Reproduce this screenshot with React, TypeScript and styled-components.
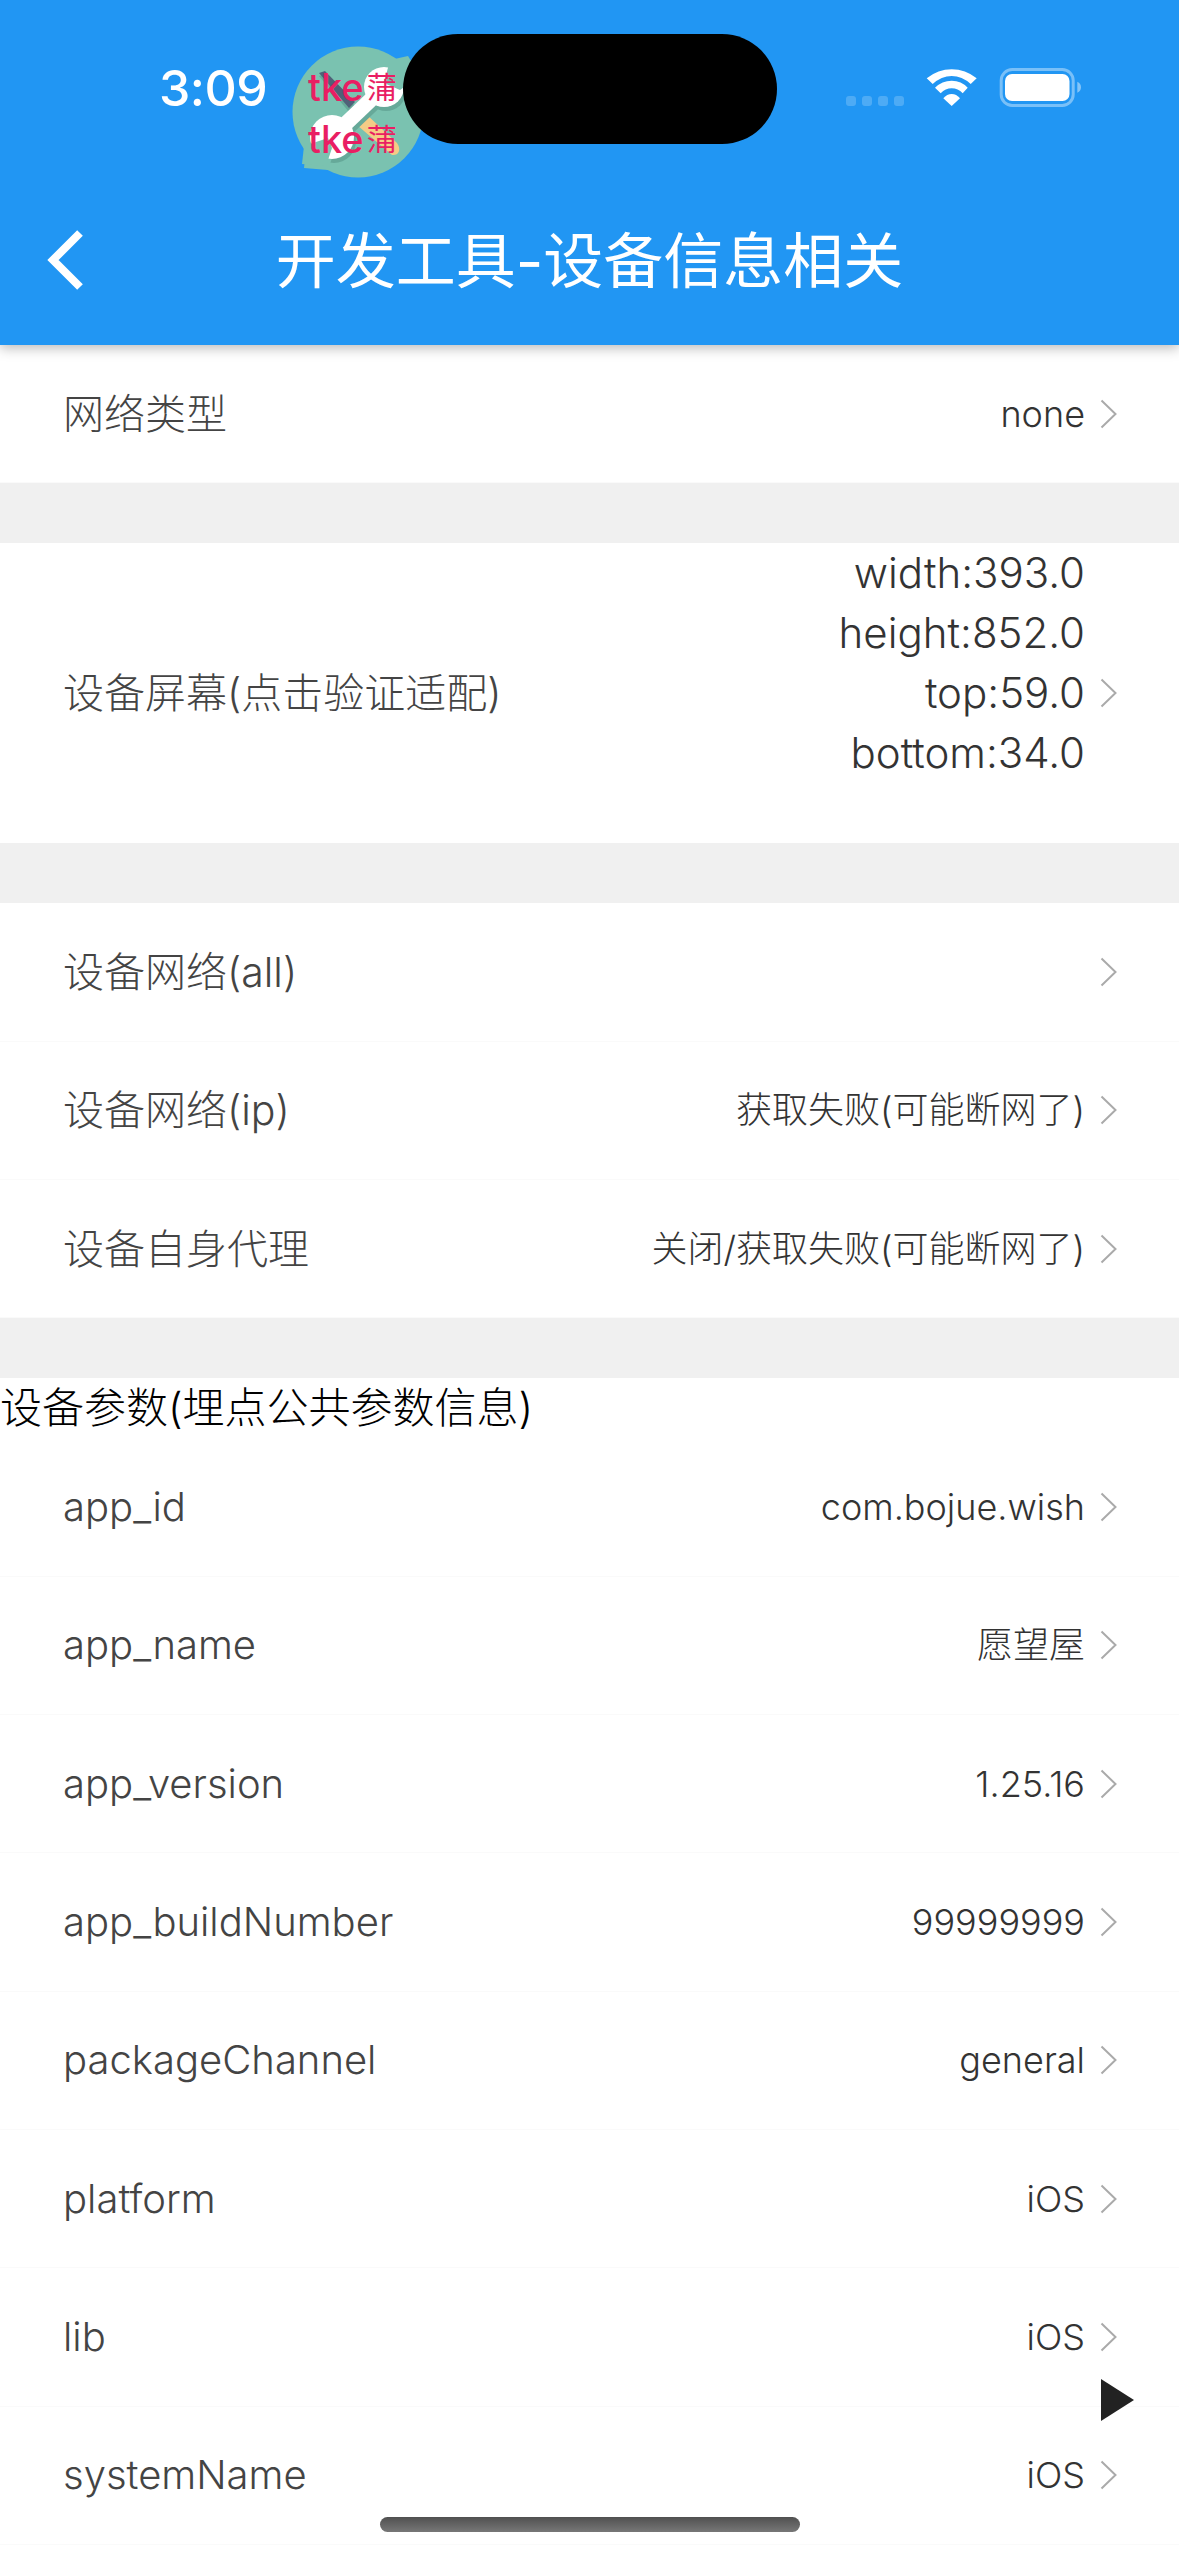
import React from "react";
import styled, { createGlobalStyle } from "styled-components";

const Global = createGlobalStyle`
  html, body { margin: 0; padding: 0; background: #fff; }
  body { font-family: "Inter", "Noto Sans CJK SC", sans-serif; }
  * { box-sizing: border-box; }
`;

const Screen = styled.div`
  position: relative;
  width: 1179px;
  height: 2556px;
  overflow: hidden;
  background: #fff;
`;

const Header = styled.header`
  position: relative;
  z-index: 2;
  height: 345px;
  background: #2196f3;
  box-shadow: 0 3px 12px rgba(0, 0, 0, 0.28);
`;

const StatusBar = styled.div`
  display: flex;
  align-items: flex-start;
  justify-content: space-between;
  height: 177px;
  padding: 58px 98px 0 159px;
`;

const Clock = styled.span`
  font-family: "Inter", sans-serif;
  font-size: 50px;
  line-height: 60px;
  font-weight: 500;
  letter-spacing: -0.5px;
  color: #fff;
`;

const StatusIcons = styled.div`
  display: flex;
  align-items: flex-start;
  padding-top: 10px;
`;

const Island = styled.div`
  position: absolute;
  left: 403px;
  top: 34px;
  width: 374px;
  height: 110px;
  border-radius: 55px;
  background: #000;
`;

const DebugBubble = styled.div`
  position: absolute;
  left: 292px;
  top: 46px;
  width: 132px;
  height: 132px;
`;

const BubbleText = styled.div<{ $top: number }>`
  position: absolute;
  left: 16px;
  top: ${(p) => p.$top}px;
  display: flex;
  align-items: center;
  gap: 3px;
  font-family: "Inter", "Noto Sans CJK SC", sans-serif;
  color: #e91e63;
  font-size: 38px;
  font-weight: 500;
  line-height: 40px;
  white-space: nowrap;
`;

const BubbleHan = styled.span`
  font-size: 30px;
  font-weight: 400;
`;

const NavBar = styled.div`
  position: relative;
  display: flex;
  align-items: center;
  justify-content: center;
  height: 168px;
`;

const BackIcon = styled.svg`
  position: absolute;
  left: 44px;
  top: 52px;
`;

const NavTitle = styled.h1`
  margin: 0;
  font-family: "Inter", "Noto Sans CJK SC", sans-serif;
  font-size: 60px;
  line-height: 80px;
  font-weight: 400;
  color: #fff;
`;

const Gap = styled.div`
  height: 60px;
  background: #f0f0f0;
`;

const Row = styled.div<{ $tall?: boolean }>`
  display: flex;
  align-items: center;
  height: ${(p) => (p.$tall ? "300px" : "138.33px")};
  padding: 0 62px 0 63px;
  border-bottom: ${(p) => (p.$tall ? "none" : "1px solid #fafafa")};
`;

const Label = styled.span<{ $han?: boolean }>`
  flex: 1;
  font-size: ${(p) => (p.$han ? 41 : 40)}px;
  line-height: 60px;
  font-weight: 300;
  color: #444;
`;

const Value = styled.span`
  font-size: 36px;
  line-height: 60px;
  font-weight: 300;
  color: #333;
  text-align: right;
`;

const ScreenValue = styled.div`
  padding-bottom: 60px;
  font-size: 42px;
  line-height: 60px;
  font-weight: 300;
  color: #333;
  text-align: right;
`;

const Chevron = styled.svg`
  flex: none;
  margin-left: 15px;
`;

const SectionTitle = styled.h2`
  margin: 0;
  height: 60px;
  font-size: 42px;
  line-height: 60px;
  font-weight: 300;
  color: #000;
`;

const PlayMark = styled.svg`
  position: absolute;
  left: 1101px;
  top: 2379px;
`;

const HomeBar = styled.div`
  position: absolute;
  left: 380px;
  top: 2517px;
  width: 420px;
  height: 15px;
  border-radius: 8px;
  background: linear-gradient(#505050, #777);
`;

const Arrow = () => (
  <Chevron width="17" height="30" viewBox="0 0 17 30" fill="none">
    <path d="M1.5 1.5 15.5 15 1.5 28.5" stroke="#aaa" strokeWidth="2" />
  </Chevron>
);

type Item = { label: string; value?: string; han?: boolean };

const ItemRow = ({ label, value, han }: Item) => (
  <Row>
    <Label $han={han}>{label}</Label>
    {value && <Value>{value}</Value>}
    <Arrow />
  </Row>
);

const networkRows: Item[] = [
  { label: "设备网络(all)", han: true },
  { label: "设备网络(ip)", value: "获取失败(可能断网了)", han: true },
  { label: "设备自身代理", value: "关闭/获取失败(可能断网了)", han: true },
];

const paramRows: Item[] = [
  { label: "app_id", value: "com.bojue.wish" },
  { label: "app_name", value: "愿望屋" },
  { label: "app_version", value: "1.25.16" },
  { label: "app_buildNumber", value: "99999999" },
  { label: "packageChannel", value: "general" },
  { label: "platform", value: "iOS" },
  { label: "lib", value: "iOS" },
  { label: "systemName", value: "iOS" },
];

const Wrench = ({ fill, notch }: { fill: string; notch: string }) => (
  <g>
    <path d="M45 86 88 45" stroke={fill} strokeWidth="15" />
    <circle cx="92" cy="41" r="20" fill={fill} />
    <circle cx="40" cy="91" r="22" fill={fill} />
    <path d="M98 14 92 37 108 44 128 30 116 10z" fill={notch} />
    <path d="M12 100 36 92 40 102 34 120 10 118z" fill={notch} />
  </g>
);

export default function App() {
  return (
    <>
      <Global />
      <Screen>
        <Header>
          <StatusBar>
            <Clock>3:09</Clock>
            <StatusIcons>
              <svg width="235" height="42" viewBox="0 0 235 42">
                <g fill="#fff" fillOpacity="0.2">
                  <rect x="0" y="28" width="10" height="10" rx="3" />
                  <rect x="16" y="28" width="10" height="10" rx="3" />
                  <rect x="32" y="28" width="10" height="10" rx="3" />
                  <rect x="48" y="28" width="10" height="10" rx="3" />
                </g>
                <g fill="#fff">
                  <path d="M80.700 10.300Q92 1.300 105.700 1.300T130.700 10.300L124.700 16Q116 8 105.700 8T86.700 16z" />
                  <path d="M89 19.700Q96 12.700 105.700 12.700T121.700 19.700L116.700 25.300Q112 20.300 105.700 20.300T94.700 25.300z" />
                  <path d="M97.300 30.300Q101 26 105.700 26T114 30.300L105.700 38z" />
                </g>
                <rect x="155.200" y="1.500" width="72" height="36" rx="11" fill="none" stroke="#fff" strokeOpacity="0.4" strokeWidth="3" />
                <rect x="159" y="6" width="64.500" height="27" rx="7" fill="#fff" />
                <path d="M231.300 13.700c2.500 1 3.700 3 3.700 5.500s-1.200 4.500-3.700 5.500z" fill="#fff" fillOpacity="0.45" />
              </svg>
            </StatusIcons>
          </StatusBar>
          <NavBar>
            <BackIcon width="42" height="62" viewBox="0 0 42 62" fill="none">
              <path d="M36 4 9 31l27 27" stroke="#fff" strokeWidth="8" />
            </BackIcon>
            <NavTitle>开发工具-设备信息相关</NavTitle>
          </NavBar>
          <DebugBubble>
            <svg width="132" height="132" viewBox="0 0 132 132">
              <circle cx="66" cy="66" r="65.500" fill="#7ac2b0" />
              <path d="M27 30 57 66 63 60 33 28z" fill="#66a999" />
              <path d="M27 27 33 25 63 56 57 62z" fill="#4f6178" />
              <path d="M73 67 105 97C110 104 106 110 100 109L65 79z" fill="#f5cc86" />
              <g transform="translate(2 4)">
                <Wrench fill="#66a999" notch="#7ac2b0" />
              </g>
              <Wrench fill="#fff" notch="#7ac2b0" />
            </svg>
            <BubbleText $top={21}>
              tke<BubbleHan>蒲</BubbleHan>
            </BubbleText>
            <BubbleText $top={73}>
              tke<BubbleHan>蒲</BubbleHan>
            </BubbleText>
          </DebugBubble>
          <Island />
        </Header>

        <ItemRow label="网络类型" value="none" han />
        <Gap />
        <Row $tall>
          <Label $han>设备屏幕(点击验证适配)</Label>
          <ScreenValue>
            width:393.0
            <br />
            height:852.0
            <br />
            top:59.0
            <br />
            bottom:34.0
          </ScreenValue>
          <Arrow />
        </Row>
        <Gap />
        {networkRows.map((r) => (
          <ItemRow key={r.label} {...r} />
        ))}
        <Gap />
        <SectionTitle>设备参数(埋点公共参数信息)</SectionTitle>
        {paramRows.map((r) => (
          <ItemRow key={r.label} {...r} />
        ))}
        <PlayMark width="33" height="42" viewBox="0 0 33 42">
          <path d="M0 0 33 21 0 42z" fill="#222" />
        </PlayMark>
        <HomeBar />
      </Screen>
    </>
  );
}
